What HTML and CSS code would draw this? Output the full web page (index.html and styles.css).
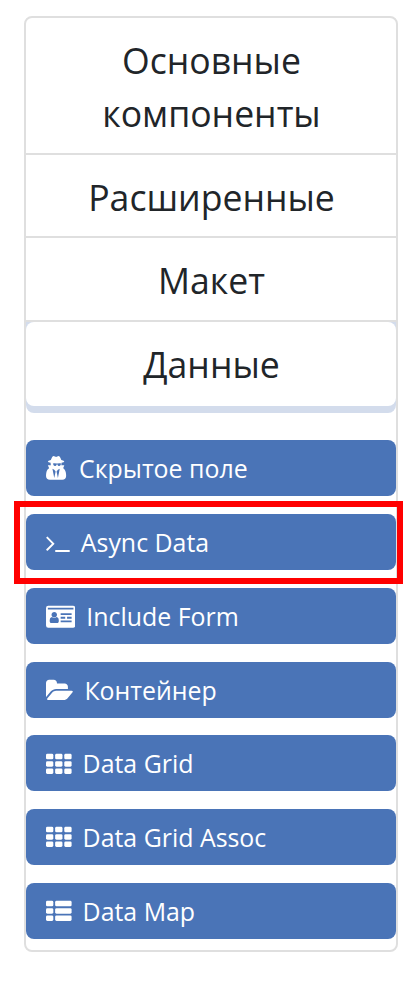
FILE: index.html
```html
<!DOCTYPE html>
<html lang="ru">
<head>
<meta charset="utf-8">
<title>Компоненты</title>
<link rel="stylesheet" href="styles.css">
</head>
<body>
<div class="panel">
  <div class="group">Основные компоненты</div>
  <div class="group">Расширенные</div>
  <div class="group">Макет</div>
  <div class="group-active"><div class="group-title">Данные</div></div>
  <div class="items">
    <div class="item"><svg class="icon secret" viewBox="0 0 1536 1792"><path d="M576 1536l96-448-96-128-128-64zm256 0l128-640-128 64-96 128zm227-1010q-2-4-4-6-10-8-96-8-70 0-167 19-7 2-21 2t-21-2q-97-19-167-19-86 0-96 8-2 2-4 6 2 18 4 27 2 3 7.5 6.5t7.5 10.5q2 4 7.5 20.5t7 20.5 7.5 17 8.5 17 9 14 12 13.5 14 9.5 17.5 8 20.5 4 24.5 2q36 0 59-12.5t32.5-30 14.5-34.5 11.5-29.5 17.5-12.5h12q11 0 17.5 12.5t11.5 29.5 14.5 34.5 32.5 30 59 12.5q13 0 24.5-2t20.5-4 17.5-8 14-9.5 12-13.5 9-14 8.5-17 7.5-17 7-20.5 7.5-20.5q2-7 7.5-10.5t7.5-6.5q2-9 4-27zm349 879q0 121-73 190t-194 69h-874q-121 0-194-69t-73-190q0-61 4.5-118t19-125.5 37.5-123.5 63.5-103.5 93.5-74.5l-90-220h214q-22-64-22-128 0-12 2-32-194-40-194-96 0-57 210-99 17-62 51.5-134t70.5-114q32-37 76-37 30 0 84 31t84 31 84-31 84-31q44 0 76 37 36 42 70.5 114t51.5 134q210 42 210 99 0 56-194 96 7 81-20 160h214l-82 225q63 33 107.5 96.5t65.5 143.5 29 151.5 8 148.5z" fill-rule="evenodd"/></svg><span>Скрытое поле</span></div>
    <div class="item"><svg class="icon terminal" viewBox="64 0 1664 1792"><path d="M649 983l-466 466q-10 10-23 10t-23-10l-50-50q-10-10-10-23t10-23l393-393-393-393q-10-10-10-23t10-23l50-50q10-10 23-10t23 10l466 466q10 10 10 23t-10 23zm1079 457v64q0 14-9 23t-23 9h-960q-14 0-23-9t-9-23v-64q0-14 9-23t23-9h960q14 0 23 9t9 23z"/></svg><span>Async Data</span><div class="highlight"></div></div>
    <div class="item"><svg class="icon card" viewBox="0 0 2048 1792"><path fill-rule="evenodd" d="M160 128H1888Q2048 128 2048 288V1504Q2048 1664 1888 1664H160Q0 1664 0 1504V288Q0 128 160 128zM128 256V384H1920V256zM896 1196q0-54-7.5-100.5t-24.5-90-51-68.5-81-25q-64 64-156 64t-156-64q-47 0-81 25t-51 68.5-24.5 90-7.5 100.5q0 55 31.5 93.5t75.5 38.5h426q44 0 75.5-38.5t31.5-93.5zM768 756q0-80-56-136t-136-56-136 56-56 136 56 136 136 56 136-56 56-136zM1024 640H1792V768H1024zM1024 896H1344V1024H1024zM1472 896H1792V1024H1472zM1024 1152H1792V1280H1024z"/></svg><span>Include Form</span></div>
    <div class="item"><svg class="icon folder" viewBox="0 0 1920 1792"><path d="M1879 952q0 31-31 66l-336 396q-43 51-120.5 86.5t-143.5 35.5h-1088q-34 0-60.5-13t-26.5-43q0-31 31-66l336-396q43-51 120.5-86.5t143.5-35.5h1088q34 0 60.5 13t26.5 43zm-343-344v160h-832q-94 0-197 47.5t-164 119.5l-337 396-5 6q0-4-.5-12.5t-.5-12.5v-960q0-92 66-158t158-66h320q92 0 158 66t66 158v32h544q92 0 158 66t66 158z"/></svg><span>Контейнер</span></div>
    <div class="item"><svg class="icon grid" viewBox="0 0 1792 1792"><g id="grid-cells"><rect y="128" width="512" height="384" rx="96"/><rect x="640" y="128" width="512" height="384" rx="96"/><rect x="1280" y="128" width="512" height="384" rx="96"/><rect y="640" width="512" height="384" rx="96"/><rect x="640" y="640" width="512" height="384" rx="96"/><rect x="1280" y="640" width="512" height="384" rx="96"/><rect y="1152" width="512" height="384" rx="96"/><rect x="640" y="1152" width="512" height="384" rx="96"/><rect x="1280" y="1152" width="512" height="384" rx="96"/></g></svg><span>Data Grid</span></div>
    <div class="item"><svg class="icon grid" viewBox="0 0 1792 1792"><use href="#grid-cells"/></svg><span>Data Grid Assoc</span></div>
    <div class="item"><svg class="icon grid" viewBox="0 0 1792 1792"><rect y="128" width="512" height="384" rx="96"/><rect x="640" y="128" width="1152" height="384" rx="96"/><rect y="640" width="512" height="384" rx="96"/><rect x="640" y="640" width="1152" height="384" rx="96"/><rect y="1152" width="512" height="384" rx="96"/><rect x="640" y="1152" width="1152" height="384" rx="96"/></svg><span>Data Map</span></div>
  </div>
</div>
</body>
</html>
```
FILE: styles.css
```css
* { box-sizing: border-box; }
body {
  margin: 0;
  padding: 16px 19px 0 24px;
  background: #fff;
  color: #212529;
  font-family: "Open Sans", "Noto Sans", sans-serif;
}
.panel {
  width: 374px;
  height: 936px;
  border: 2px solid #dfdfdf;
  border-radius: 8px;
}
.group, .group-title {
  font-size: 35.6px;
  line-height: 53.3px;
  text-align: center;
  padding: 16px 39px 0 40px;
}
.group {
  height: 83px;
  border-bottom: 2px solid #dfdfdf;
}
.group:first-child { height: 137px; }
.group:nth-child(3) { height: 84px; }
.group-active {
  height: 91px;
  background: #d3dcec;
  border-radius: 0 0 8px 8px;
}
.group-title {
  height: 84px;
  background: #fff;
  border-radius: 8px;
}
.items {
  display: flex;
  flex-direction: column;
  gap: 17.83px;
  padding-top: 27.1px;
}
.item {
  position: relative;
  display: flex;
  align-items: center;
  height: 56px;
  padding-left: 20px;
  gap: 11px;
  border-radius: 8px;
  background: #4a74b7;
  color: #fff;
  font-size: 24.9px;
  line-height: 38px;
  white-space: nowrap;
}
.icon {
  height: 25.6px;
  flex: none;
  margin-top: 2px;
  fill: currentColor;
}
.secret { width: 22px; }
.terminal { width: 23.8px; }
.card { width: 29.3px; }
.folder { width: 27.4px; }
.grid { width: 25.6px; }
.highlight {
  position: absolute;
  left: -12px;
  top: -13px;
  width: 389px;
  height: 83px;
  border: 6px solid #f00;
  z-index: 1;
}
```
